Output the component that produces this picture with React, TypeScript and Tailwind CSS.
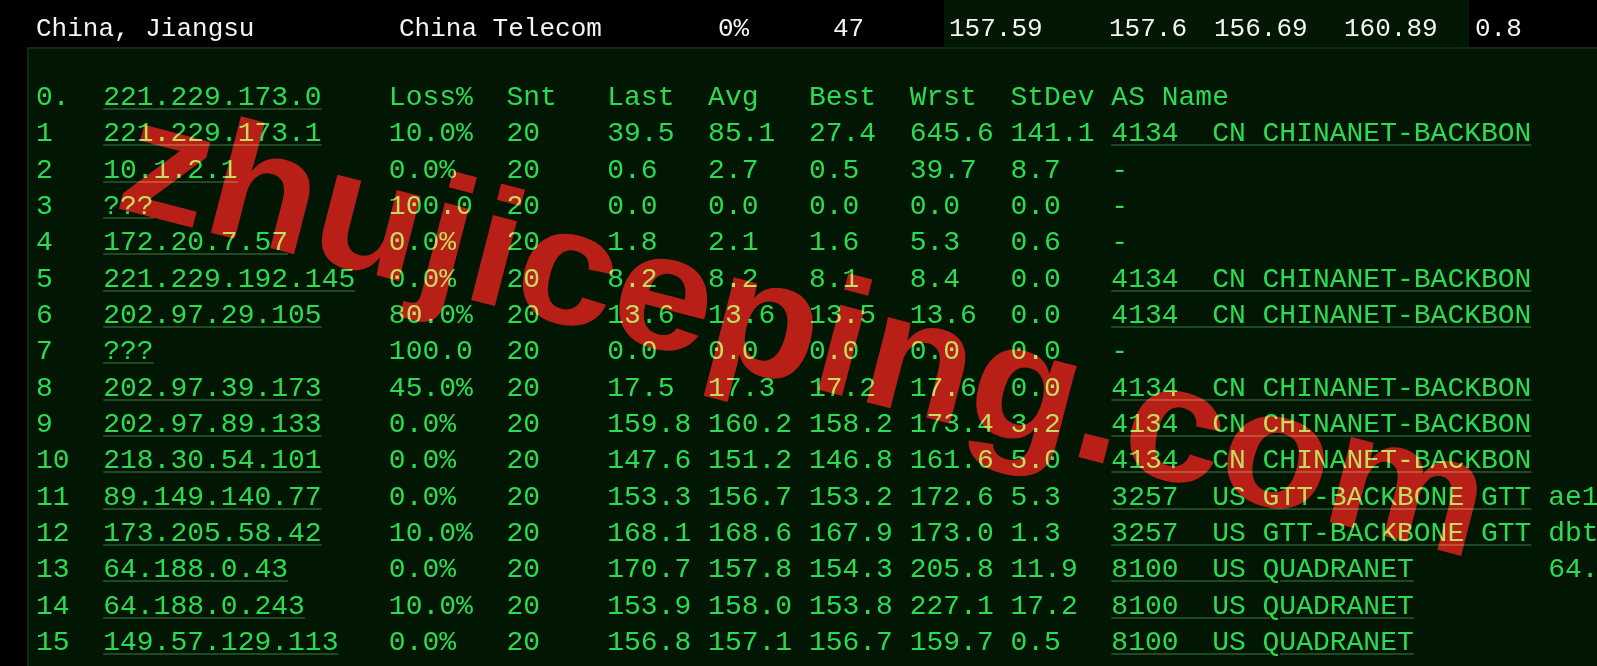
import React from 'react';

type Row = [string, string, string, string, string, string, string, string, string, string, string?];

const ROWS: Row[] = [
  ['0.', '221.229.173.0', 'Loss%', 'Snt', 'Last', 'Avg', 'Best', 'Wrst', 'StDev', 'AS Name'],
  ['1', '221.229.173.1', '10.0%', '20', '39.5', '85.1', '27.4', '645.6', '141.1', '4134  CN CHINANET-BACKBON'],
  ['2', '10.1.2.1', '0.0%', '20', '0.6', '2.7', '0.5', '39.7', '8.7', '-'],
  ['3', '???', '100.0', '20', '0.0', '0.0', '0.0', '0.0', '0.0', '-'],
  ['4', '172.20.7.57', '0.0%', '20', '1.8', '2.1', '1.6', '5.3', '0.6', '-'],
  ['5', '221.229.192.145', '0.0%', '20', '8.2', '8.2', '8.1', '8.4', '0.0', '4134  CN CHINANET-BACKBON'],
  ['6', '202.97.29.105', '80.0%', '20', '13.6', '13.6', '13.5', '13.6', '0.0', '4134  CN CHINANET-BACKBON'],
  ['7', '???', '100.0', '20', '0.0', '0.0', '0.0', '0.0', '0.0', '-'],
  ['8', '202.97.39.173', '45.0%', '20', '17.5', '17.3', '17.2', '17.6', '0.0', '4134  CN CHINANET-BACKBON'],
  ['9', '202.97.89.133', '0.0%', '20', '159.8', '160.2', '158.2', '173.4', '3.2', '4134  CN CHINANET-BACKBON'],
  ['10', '218.30.54.101', '0.0%', '20', '147.6', '151.2', '146.8', '161.6', '5.0', '4134  CN CHINANET-BACKBON'],
  ['11', '89.149.140.77', '0.0%', '20', '153.3', '156.7', '153.2', '172.6', '5.3', '3257  US GTT-BACKBONE GTT', 'ae1'],
  ['12', '173.205.58.42', '10.0%', '20', '168.1', '168.6', '167.9', '173.0', '1.3', '3257  US GTT-BACKBONE GTT', 'dbt'],
  ['13', '64.188.0.43', '0.0%', '20', '170.7', '157.8', '154.3', '205.8', '11.9', '8100  US QUADRANET', '64.'],
  ['14', '64.188.0.243', '10.0%', '20', '153.9', '158.0', '153.8', '227.1', '17.2', '8100  US QUADRANET'],
  ['15', '149.57.129.113', '0.0%', '20', '156.8', '157.1', '156.7', '159.7', '0.5', '8100  US QUADRANET'],
];

const link = 'underline decoration-2 decoration-[#1d4a25] underline-offset-[3px]';

export default function App() {
  return (
    <div className="relative w-[1597px] h-[666px] overflow-hidden bg-black font-['Liberation_Mono',monospace]">
      {/* summary line */}
      <div className="flex h-[47px] text-[26px] leading-[30px] text-[#f4f4f4] whitespace-pre">
        <div className="flex pl-[36px] w-[944px]">
          <div className="w-[363px] pt-[14px]">China, Jiangsu</div>
          <div className="w-[319px] pt-[14px]">China Telecom</div>
          <div className="w-[115px] pt-[14px]">0%</div>
          <div className="w-[111px] pt-[14px]">47</div>
        </div>
        <div className="flex pl-[5px] w-[525px] bg-[#021804]">
          <div className="w-[160px] pt-[14px]">157.59</div>
          <div className="w-[105px] pt-[14px]">157.6</div>
          <div className="w-[130px] pt-[14px]">156.69</div>
          <div className="w-[125px] pt-[14px]">160.89</div>
        </div>
        <div className="pl-[6px] pt-[14px]">0.8</div>
      </div>

      {/* mtr output */}
      <div className="ml-[27px] h-[619px] border-t-2 border-l-2 border-[#0f2a14] bg-[#011603] pl-[7px] pt-[31px] text-[28px] leading-[36.35px] text-[#2bdc52] whitespace-pre">
        {ROWS.map((r, i) => {
          const plainAs = r[9] === '-' || r[9] === 'AS Name';
          return (
            <div key={i} className="flex">
              <div className="w-[4ch] shrink-0">{r[0]}</div>
              <div className="w-[17ch] shrink-0"><span className={link}>{r[1]}</span></div>
              <div className="w-[7ch] shrink-0">{r[2]}</div>
              <div className="w-[6ch] shrink-0">{r[3]}</div>
              <div className="w-[6ch] shrink-0">{r[4]}</div>
              <div className="w-[6ch] shrink-0">{r[5]}</div>
              <div className="w-[6ch] shrink-0">{r[6]}</div>
              <div className="w-[6ch] shrink-0">{r[7]}</div>
              <div className="w-[6ch] shrink-0">{r[8]}</div>
              <div className="w-[26ch] shrink-0">
                <span className={plainAs ? '' : link}>{r[9]}</span>
              </div>
              {r[10] && <div className="shrink-0">{r[10]}</div>}
            </div>
          );
        })}
      </div>

      {/* watermark */}
      <div className="pointer-events-none absolute left-[112px] top-[67px] origin-[0px_140px] rotate-[14.5deg] scale-x-[1.08] mix-blend-screen whitespace-nowrap font-['Liberation_Sans',sans-serif] text-[166px] font-bold leading-none text-[#b80a14]">
        zhujiceping.com
      </div>
    </div>
  );
}
